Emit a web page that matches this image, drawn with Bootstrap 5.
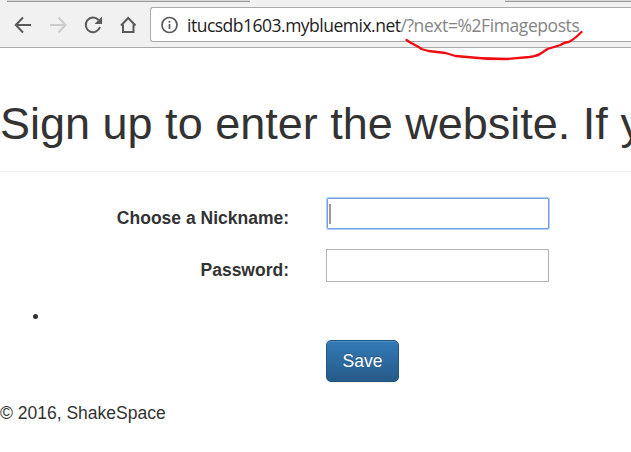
<!DOCTYPE html>
<html lang="en">
<head>
<meta charset="utf-8">
<meta name="viewport" content="width=device-width, initial-scale=1">
<title>ShakeSpace</title>
<link href="https://cdn.jsdelivr.net/npm/bootstrap@5.3.0/dist/css/bootstrap.min.css" rel="stylesheet">
<style>
body{font:17.5px/25px "Liberation Sans",Arial,sans-serif;color:#333;background:#fff;height:452px;overflow:hidden}
.browser{height:48px;background:#f1f1f1;border-bottom:1px solid #aaa}
.tabs{height:2px}
.tab-a,.tab-b{background:#d8d8d8;border-bottom:1px solid #989898;height:2px}
.tab-a{width:243px;margin-left:7px}
.tab-b{width:126px}
.tools{height:45px}
.tools svg{flex:none}
.address{height:35px;margin:5px 0 0 150px;border:1px solid #aaa;border-right:0;border-radius:3px 0 0 3px;background:#fff;padding-left:10px}
.nav-icons{left:0;top:0}
.url{font:17.5px/34px "Open Sans","Noto Sans",sans-serif;color:#222;margin-left:8px}
.host{display:inline-block;letter-spacing:-.5px}
.path{color:#858585;display:inline-block;letter-spacing:-.42px}
.underline{left:395px;top:25px}
.page-title{font-size:45px;line-height:50px;font-weight:400;padding:51px 0 22px;margin:0;border-bottom:1px solid #eee;white-space:nowrap;overflow:hidden;color:#333}
.field-label{width:289px;text-align:right;font-weight:700;padding-top:9px}
.field-row{height:32px;margin-bottom:20px}
.form-area{padding-top:25px}
.field{width:223px;height:33px;border:1px solid #b4b4b4;border-radius:0;margin-left:37px;padding:0 1px}
.field.active{border:1px solid #6f9fe8;box-shadow:0 0 0 1px #b5cff5;border-radius:1px;width:222px;height:31px;margin-top:1px;margin-left:38px}
.caret{width:2px;height:20px;background:#999}
.bullets{margin:0;padding:13px 0 0 50px;height:39px}
.bullets li{list-style:none;margin-left:-17px}
.bullets li::before{content:"";display:block;width:5px;height:5px;border-radius:50%;background:#333}
.btn-save{display:block;margin-left:326px;width:73px;height:42px;padding:0;font-size:17.5px;color:#fff;border:1px solid #245580;border-radius:5px;background:linear-gradient(#337ab7,#265a88);text-shadow:0 -1px 0 rgba(0,0,0,.2);box-shadow:inset 0 1px 0 rgba(255,255,255,.15),0 1px 1px rgba(0,0,0,.075)}
.page-foot{padding-top:19px}
</style>
<script src="https://cdn.jsdelivr.net/npm/bootstrap@5.3.0/dist/js/bootstrap.bundle.min.js"></script>
</head>
<body>
<header class="browser position-relative">
  <div class="tabs d-flex justify-content-between"><div class="tab-a"></div><div class="tab-b"></div></div>
  <svg class="nav-icons position-absolute" width="145" height="48" fill="none" stroke="#5a5a5a" stroke-width="2" aria-hidden="true">
    <path d="M31 25H16M23 17.5 15.8 25l7.2 7.5"/>
    <path stroke="#ccc" d="M50 25h15M58.500 17.500 65.500 25l-7 7.500"/>
    <path d="M98.500 20A7.300 7.300 0 1 0 100 27"/>
    <path fill="#5a5a5a" stroke="none" d="M102 16.500v7.500h-7.500z"/>
    <path d="M121 25.500 128.200 18l7.300 7.500M123 24.500V32h10.500v-7.500"/>
  </svg>
  <div class="tools d-flex">
    <div class="address d-flex align-items-center flex-fill">
      <svg width="18" height="18" fill="none" stroke="#5a5a5a" stroke-width="1.700" aria-hidden="true"><circle cx="8.500" cy="9" r="7.500"/><path d="M8.500 8v5M8.500 5v1.800"/></svg>
      <div class="url text-nowrap"><span class="host">itucsdb1603.mybluemix.net</span><span class="path">/?next=%2Fimageposts</span></div>
    </div>
  </div>
  <svg class="underline position-absolute" width="195" height="38" fill="none" stroke="#f00d12" stroke-width="2.300" stroke-linecap="round" stroke-linejoin="round" aria-hidden="true"><path d="M11.500 15c5 4 10 5 15 9l7 2 17 2 10 3q26 3 52 3l22-2q8-1 12-4l6-4 13-4q5-3 8-3 5-2 13-10"/></svg>
</header>
<main>
  <h1 class="page-title">Sign up to enter the website. If you</h1>
  <form class="form-area">
    <div class="field-row d-flex">
      <label class="field-label">Choose a Nickname:</label>
      <div class="field active d-flex align-items-center"><span class="caret"></span></div>
    </div>
    <div class="field-row d-flex">
      <label class="field-label">Password:</label>
      <div class="field"></div>
    </div>
    <ul class="bullets"><li></li></ul>
    <button type="button" class="btn btn-save">Save</button>
  </form>
</main>
<footer class="page-foot">© 2016, ShakeSpace</footer>
</body>
</html>
